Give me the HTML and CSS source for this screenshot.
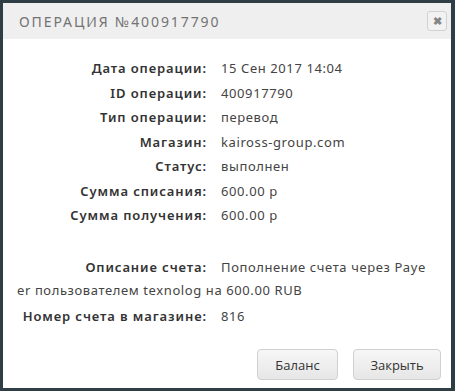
FILE: index.html
```html
<!DOCTYPE html>
<html lang="ru">
<head>
    <meta charset="UTF-8">
    <title>Операция №400917790</title>
    <link rel="stylesheet" href="styles.css">
</head>
<body>
    <div class="dialog">
        <div class="dialog-header">
            <div class="dialog-title">Операция №400917790</div>
            <button class="close-btn" aria-label="Закрыть">&#10006;</button>
        </div>
        <div class="dialog-body">
            <div class="row"><span class="label">Дата операции:</span><span class="value">15 Сен 2017 14:04</span></div>
            <div class="row"><span class="label">ID операции:</span><span class="value">400917790</span></div>
            <div class="row"><span class="label">Тип операции:</span><span class="value">перевод</span></div>
            <div class="row"><span class="label">Магазин:</span><span class="value">kaiross-group.com</span></div>
            <div class="row"><span class="label">Статус:</span><span class="value">выполнен</span></div>
            <div class="row"><span class="label">Сумма списания:</span><span class="value">600.00 р</span></div>
            <div class="row"><span class="label">Сумма получения:</span><span class="value">600.00 р</span></div>
            <div class="spacer"></div>
            <div class="row wrap"><span class="label">Описание счета:</span><span class="value">Пополнение счета через Payeer пользователем texnolog на 600.00 RUB</span></div>
            <div class="row"><span class="label">Номер счета в магазине:</span><span class="value">816</span></div>
        </div>
        <div class="dialog-footer">
            <button class="btn">Баланс</button>
            <button class="btn">Закрыть</button>
        </div>
    </div>
</body>
</html>
```

FILE: styles.css
```css
html, body {
    height: 100%;
}
body {
    margin: 0;
    padding: 3px 4px 3px 3px;
    box-sizing: border-box;
    background-color: #2f3d44;
    font-family: 'Noto Sans', sans-serif;
}
.dialog {
    height: 100%;
    background-color: #fff;
    display: flex;
    flex-direction: column;
}
.dialog-header {
    height: 36px;
    background-color: #efefef;
    display: flex;
    align-items: center;
    justify-content: space-between;
    padding: 0 4px 0 16px;
}
.dialog-title {
    font-size: 14px;
    text-transform: uppercase;
    letter-spacing: 1.9px;
    color: #737373;
}
.close-btn {
    width: 20px;
    height: 20px;
    padding: 0;
    border: 1px solid #d2d2d2;
    border-radius: 3px;
    background-color: #f2f2f2;
    color: #858585;
    font-size: 11px;
    font-weight: bold;
    line-height: 18px;
    cursor: pointer;
}
.dialog-body {
    flex: 1;
    padding: 18px 22px 0 14px;
    font-size: 13px;
    color: #444;
    letter-spacing: 0.6px;
}
.row {
    line-height: 23px;
    margin-bottom: 1.5px;
}
.row.wrap {
    word-break: break-all;
    margin-bottom: 3px;
}
.label {
    display: inline-block;
    width: 190px;
    margin-right: 14px;
    text-align: right;
    font-weight: 600;
    letter-spacing: 0.9px;
    color: #333;
}
.spacer {
    height: 27px;
}
.dialog-footer {
    display: flex;
    justify-content: flex-end;
    gap: 15px;
    padding: 0 10px 8px 0;
}
.btn {
    font-family: 'Open Sans', sans-serif;
    font-size: 13px;
    color: #333;
    height: 31px;
    padding: 0 14px;
    border: 1px solid #d0d0d0;
    border-radius: 4px;
    background: linear-gradient(#f7f7f7, #e6e6e6);
    cursor: pointer;
}
.btn:first-child {
    width: 81px;
}
.btn:last-child {
    width: 88px;
}
```
